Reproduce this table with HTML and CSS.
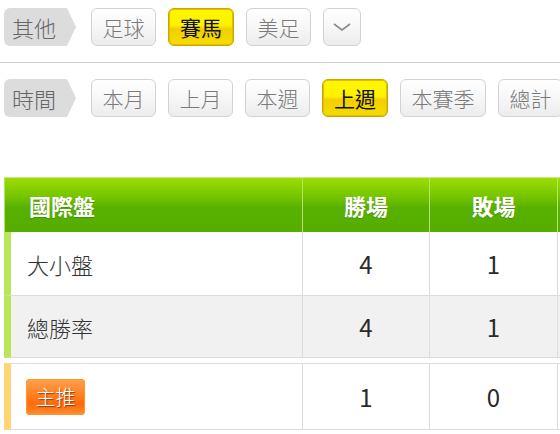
FILE: index.html
```html
<!DOCTYPE html>
<html lang="zh-Hant">
<head>
<meta charset="utf-8">
<title>統計</title>
<link rel="stylesheet" href="styles.css">
</head>
<body>
<div class="filters first">
  <div class="filter-row">
    <span class="label">其他</span>
    <button class="btn">足球</button>
    <button class="btn active">賽馬</button>
    <button class="btn">美足</button>
    <button class="btn more" aria-label="更多">
      <svg width="18" height="8" viewBox="0 0 18 8"><polyline points="1,1 9,7 17,1" fill="none" stroke="#8a8a8a" stroke-width="1.6"/></svg>
    </button>
  </div>
</div>
<div class="sep"></div>
<div class="filters">
  <div class="filter-row">
    <span class="label">時間</span>
    <button class="btn">本月</button>
    <button class="btn">上月</button>
    <button class="btn">本週</button>
    <button class="btn active">上週</button>
    <button class="btn">本賽季</button>
    <button class="btn">總計</button>
  </div>
</div>

<div class="stats" role="table">
  <div class="row head" role="row">
    <div class="cell name" role="columnheader">國際盤</div>
    <div class="cell" role="columnheader">勝場</div>
    <div class="cell" role="columnheader">敗場</div>
    <div class="cell" role="columnheader"></div>
  </div>
  <div class="row" role="row">
    <div class="cell name" role="cell">大小盤</div>
    <div class="cell num" role="cell">4</div>
    <div class="cell num" role="cell">1</div>
    <div class="cell" role="cell"></div>
  </div>
  <div class="row alt" role="row">
    <div class="cell name" role="cell">總勝率</div>
    <div class="cell num" role="cell">4</div>
    <div class="cell num" role="cell">1</div>
    <div class="cell" role="cell"></div>
  </div>
</div>

<div class="stats pick" role="table">
  <div class="row" role="row">
    <div class="cell name" role="cell"><span class="badge">主推</span></div>
    <div class="cell num" role="cell">1</div>
    <div class="cell num" role="cell">0</div>
    <div class="cell" role="cell"></div>
  </div>
</div>
</body>
</html>
```

FILE: styles.css
```css
html, body {
  margin: 0;
  padding: 0;
  overflow: hidden;
  background: #fff;
}
body {
  width: 560px;
  font-family: "Noto Sans CJK TC", "Noto Sans", sans-serif;
}
.filters {
  padding-left: 4px;
}
.filters.first {
  padding-top: 8px;
}
.filter-row {
  display: flex;
  align-items: center;
  gap: 12px;
  height: 38px;
  white-space: nowrap;
}
.label {
  box-sizing: border-box;
  width: 72px;
  height: 38px;
  margin-right: 3px;
  padding-left: 8px;
  background: #dcdcdc;
  border-radius: 6px 0 0 6px;
  clip-path: polygon(0 0, 63px 0, 72px 50%, 63px 100%, 0 100%);
  color: #666;
  font-size: 22px;
  font-weight: 300;
  line-height: 38px;
  flex: none;
}
.btn {
  box-sizing: border-box;
  height: 38px;
  padding: 0 10.5px;
  border: 1px solid #d2d2d2;
  border-radius: 6px;
  background: linear-gradient(#ffffff 0%, #f7f7f7 50%, #ececec 100%);
  color: #7a7a7a;
  font-family: inherit;
  font-size: 21px;
  font-weight: 300;
  line-height: 36px;
  flex: none;
  cursor: pointer;
}
.btn.active {
  padding: 0 11px;
  border: 1px solid #c9a600;
  box-shadow: inset 0 0 0 1px #e2c000;
  background: linear-gradient(#fff700 0%, #fff200 45%, #f1cf00 55%, #f6dc00 100%);
  color: #111;
  font-weight: 400;
}
.btn.more {
  width: 38px;
  padding: 0;
  display: flex;
  align-items: center;
  justify-content: center;
}
.sep {
  height: 1px;
  background: #d0d0d0;
  margin: 16px 0 16px;
}

/* stats table */
.stats {
  width: 682px;
  margin-left: 4px;
  margin-top: 60px;
}
.stats.pick {
  margin-top: 5px;
}
.row {
  display: grid;
  grid-template-columns: 299px 127px 128px 128px;
}
.cell {
  box-sizing: border-box;
  display: flex;
  align-items: center;
  justify-content: center;
  height: 64px;
  border-right: 1px solid #dcdcdc;
  border-bottom: 1px solid #dcdcdc;
  color: #333;
  font-size: 22px;
  font-weight: 300;
}
.cell.num {
  font-size: 24px;
  font-weight: 400;
  color: #2a2a2a;
}
.cell.name {
  justify-content: flex-start;
  padding-left: 16px;
  border-left: 7px solid #b9e75a;
}
.row.alt .cell {
  background: #f1f1f1;
  height: 62px;
}
.row.head .cell {
  height: 55px;
  background: linear-gradient(#9ddd00 0%, #74c400 35%, #58b000 55%, #55ad00 100%);
  border-top: 1px solid #c8eb82;
  border-right: 1px solid #b6e070;
  border-bottom: 0;
  color: #fff;
  font-size: 22px;
  font-weight: bold;
  text-shadow: 0 1px 1px rgba(40, 90, 0, 0.35);
}
.row.head .cell.name {
  border-left: 1px solid #b6e070;
  padding-left: 24px;
}
.pick .cell {
  height: 67px;
  border-top: 1px solid #dcdcdc;
}
.pick .cell.name {
  border-left-color: #ffd56f;
  padding-left: 15px;
}
.badge {
  display: inline-block;
  height: 36px;
  padding: 0 9.5px;
  border-radius: 4px;
  background: linear-gradient(#ffa24c 0%, #ff7a1e 50%, #ff6a0a 70%, #ff8c34 100%);
  box-shadow: inset 0 0 0 1px #ff9a2a;
  color: #fff;
  font-size: 20px;
  line-height: 36px;
  text-shadow: 1px 1px 1px rgba(120, 40, 0, 0.8);
}
```
